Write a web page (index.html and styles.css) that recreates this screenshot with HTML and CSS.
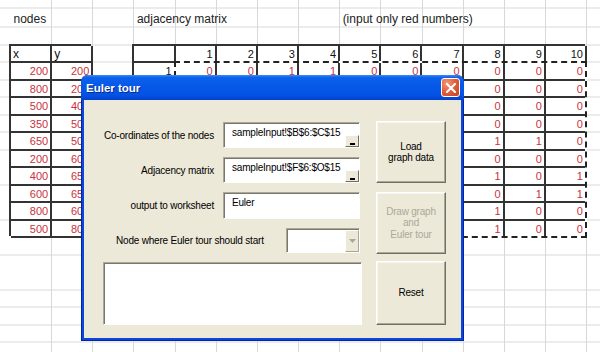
FILE: index.html
```html
<!doctype html>
<head>
    <meta charSet="utf-8" />
    <meta name="viewport" content="width=device-width, initial-scale=1" />
    <title>Euler tour</title>
    <link rel="stylesheet" href="styles.css">
</head>
<body>
    <div class="sheet">
        <div class="label nodes_label">nodes</div>
        <div class="label matrix_label">adjacency matrix</div>
        <div class="label hint_label">(input only red numbers)</div>

        <div class="tbl nodes_tbl">
            <div class="cell head">x</div><div class="cell head">y</div>
            <div class="cell red">200</div><div class="cell red">200</div>
            <div class="cell red">800</div><div class="cell red">200</div>
            <div class="cell red">500</div><div class="cell red">400</div>
            <div class="cell red">350</div><div class="cell red">500</div>
            <div class="cell red">650</div><div class="cell red">500</div>
            <div class="cell red">200</div><div class="cell red">600</div>
            <div class="cell red">400</div><div class="cell red">650</div>
            <div class="cell red">600</div><div class="cell red">650</div>
            <div class="cell red">800</div><div class="cell red">600</div>
            <div class="cell red">500</div><div class="cell red">800</div>
        </div>

        <!-- rows 2-10, columns 1-7 sit under the dialog, so they stay empty -->
        <div class="tbl matrix_tbl">
            <div class="cell"></div><div class="cell">1</div><div class="cell">2</div><div class="cell">3</div><div class="cell">4</div><div class="cell">5</div><div class="cell">6</div><div class="cell">7</div><div class="cell">8</div><div class="cell">9</div><div class="cell">10</div>
            <div class="cell">1</div><div class="cell red">0</div><div class="cell red">0</div><div class="cell red">1</div><div class="cell red">1</div><div class="cell red">0</div><div class="cell red">0</div><div class="cell red">0</div><div class="cell red">0</div><div class="cell red">0</div><div class="cell red">0</div>
            <div class="cell"></div><div class="cell"></div><div class="cell"></div><div class="cell"></div><div class="cell"></div><div class="cell"></div><div class="cell"></div><div class="cell"></div><div class="cell red">0</div><div class="cell red">0</div><div class="cell red">0</div>
            <div class="cell"></div><div class="cell"></div><div class="cell"></div><div class="cell"></div><div class="cell"></div><div class="cell"></div><div class="cell"></div><div class="cell"></div><div class="cell red">0</div><div class="cell red">0</div><div class="cell red">0</div>
            <div class="cell"></div><div class="cell"></div><div class="cell"></div><div class="cell"></div><div class="cell"></div><div class="cell"></div><div class="cell"></div><div class="cell"></div><div class="cell red">0</div><div class="cell red">0</div><div class="cell red">0</div>
            <div class="cell"></div><div class="cell"></div><div class="cell"></div><div class="cell"></div><div class="cell"></div><div class="cell"></div><div class="cell"></div><div class="cell"></div><div class="cell red">1</div><div class="cell red">1</div><div class="cell red">0</div>
            <div class="cell"></div><div class="cell"></div><div class="cell"></div><div class="cell"></div><div class="cell"></div><div class="cell"></div><div class="cell"></div><div class="cell"></div><div class="cell red">0</div><div class="cell red">0</div><div class="cell red">0</div>
            <div class="cell"></div><div class="cell"></div><div class="cell"></div><div class="cell"></div><div class="cell"></div><div class="cell"></div><div class="cell"></div><div class="cell"></div><div class="cell red">1</div><div class="cell red">0</div><div class="cell red">1</div>
            <div class="cell"></div><div class="cell"></div><div class="cell"></div><div class="cell"></div><div class="cell"></div><div class="cell"></div><div class="cell"></div><div class="cell"></div><div class="cell red">0</div><div class="cell red">1</div><div class="cell red">1</div>
            <div class="cell"></div><div class="cell"></div><div class="cell"></div><div class="cell"></div><div class="cell"></div><div class="cell"></div><div class="cell"></div><div class="cell"></div><div class="cell red">1</div><div class="cell red">0</div><div class="cell red">0</div>
            <div class="cell"></div><div class="cell"></div><div class="cell"></div><div class="cell"></div><div class="cell"></div><div class="cell"></div><div class="cell"></div><div class="cell"></div><div class="cell red">1</div><div class="cell red">0</div><div class="cell red">0</div>
        </div>
        <div class="ants"></div>

        <div class="dialog">
            <div class="titlebar">
                <span class="title">Euler tour</span>
                <span class="close">
                    <svg width="10" height="10" viewBox="0 0 10 10"><path d="M1 1 L9 9 M9 1 L1 9" stroke="#fff" stroke-width="2" stroke-linecap="square"/></svg>
                </span>
            </div>
            <div class="client">
                <div class="left_col">
                    <div class="fields">
                        <label class="field_label">Co-ordinates of the nodes</label>
                        <div class="textbox"><span class="tb_text">sampleInput!$B$6:$C$15</span><span class="ref_btn"><i></i></span></div>
                        <label class="field_label">Adjacency matrix</label>
                        <div class="textbox"><span class="tb_text">sampleInput!$F$6:$O$15</span><span class="ref_btn"><i></i></span></div>
                        <label class="field_label">output to worksheet</label>
                        <div class="textbox tall"><span class="tb_text">Euler</span></div>
                    </div>
                    <div class="start_row">
                        <label class="start_label">Node where Euler tour should start</label>
                        <div class="combo"><span class="combo_text"></span><span class="combo_btn"><svg width="7" height="4" viewBox="0 0 7 4"><path d="M0 0 H7 L3.5 4 Z" fill="#aca899"/></svg></span></div>
                    </div>
                    <div class="listbox"></div>
                </div>
                <div class="btn_col">
                    <div class="btn load">Load<br>graph data</div>
                    <div class="btn draw disabled">Draw graph<br>and<br>Euler tour</div>
                    <div class="btn reset">Reset</div>
                </div>
            </div>
        </div>
    </div>
</body>
</html>
```

FILE: styles.css
```css
body {
    margin: 0;
    background: #fff;
    overflow: hidden;
    font-family: "Liberation Sans", Arial, sans-serif;
}
.sheet {
    position: relative;
    width: 600px;
    height: 352px;
    display: grid;
    grid-template-columns: 11px repeat(14, 41.15px) 1fr;
    grid-template-rows: 10.5px repeat(20, 17.5px);
    background-image:
        repeating-linear-gradient(to right, transparent 0 40.15px, #d8d8d8 40.15px 41.15px),
        repeating-linear-gradient(to bottom, transparent 0 16.5px, #d8d8d8 16.5px 17.5px);
    background-position: 11px 0, 0 10.5px;
}
.label {
    font-size: 12px;
    color: #222;
    white-space: nowrap;
    align-self: center;
    padding-left: 2.5px;
}
.nodes_label { grid-column: 2; grid-row: 2; }
.matrix_label { grid-column: 5; grid-row: 2; }
.hint_label { grid-column: 10; grid-row: 2; }

.tbl {
    display: grid;
    grid-template-rows: repeat(11, 1fr);
    box-shadow: -2px -2px 0 #333;
    background: #fff;
}
.nodes_tbl {
    grid-column: 2 / 4;
    grid-row: 4 / 15;
    grid-template-columns: repeat(2, 1fr);
}
.matrix_tbl {
    grid-column: 5 / 16;
    grid-row: 4 / 15;
    grid-template-columns: repeat(11, 1fr);
}
.cell {
    box-sizing: border-box;
    border-right: 2px solid #333;
    border-bottom: 2px solid #333;
    font-size: 11px;
    color: #111;
    text-align: right;
    padding-right: 2px;
    line-height: 16px;
    overflow: hidden;
}
.cell.head {
    text-align: left;
    padding-left: 2px;
    font-size: 12px;
}
.cell.red {
    color: #c8323c;
}
.ants {
    grid-column: 6 / 16;
    grid-row: 5 / 15;
    margin: -2px 0 0 -2px;
    border: 2px solid #fff;
}
.ants::before {
    content: "";
    display: block;
    box-sizing: border-box;
    margin: -2px;
    height: calc(100% + 4px);
    border: 2px dashed #222;
}

.dialog {
    position: absolute;
    left: 81px;
    top: 75px;
    width: 383px;
    border-radius: 7px 7px 0 0;
    overflow: hidden;
    background: #0c47dc;
    box-shadow: inset 0 0 0 1px #0026a6;
}
.titlebar {
    height: 25px;
    display: flex;
    align-items: center;
    padding: 0 4px 0 5px;
    background: linear-gradient(to bottom, #3d8cf5 0%, #0d62ec 10%, #0558e8 45%, #0452e4 80%, #0340cc 100%);
}
.title {
    color: #fff;
    font-weight: bold;
    font-size: 11.5px;
    text-shadow: 1px 1px 0 #0a2a8a;
    flex-grow: 1;
}
.close {
    width: 17px;
    height: 17px;
    border: 1px solid #fff;
    border-radius: 3px;
    display: flex;
    align-items: center;
    justify-content: center;
    background: radial-gradient(circle at 30% 25%, #f19a7e 0%, #e2623f 45%, #c7401b 100%);
}
.client {
    margin: 0 3px 3px;
    background: #ece9d8;
    display: flex;
    gap: 14px;
    padding: 21px 15px 13px 19px;
    font-size: 10px;
    letter-spacing: -0.2px;
    color: #000;
}
.left_col {
    width: 259px;
    margin-top: 1px;
}
.fields {
    display: grid;
    grid-template-columns: 111px 137px;
    grid-template-rows: 26px 26px 27px;
    column-gap: 9px;
    row-gap: 9px;
}
.field_label {
    text-align: right;
    align-self: center;
    white-space: nowrap;
}
.textbox {
    box-sizing: border-box;
    background: #fff;
    border: 1px solid;
    border-color: #aca899 #fff #fff #aca899;
    box-shadow: inset 1px 1px 0 #7a776c;
    display: flex;
}
.tb_text {
    flex-grow: 1;
    padding: 4px 0 0 8px;
    white-space: nowrap;
}
.ref_btn {
    align-self: flex-end;
    width: 14px;
    height: 12px;
    box-sizing: border-box;
    background: #ece9d8;
    border: 1px solid;
    border-color: #fff #716f64 #716f64 #fff;
    display: flex;
    align-items: flex-end;
    justify-content: center;
}
.ref_btn i {
    width: 5px;
    height: 2px;
    background: #000;
    margin-bottom: 1px;
}
.start_row {
    display: flex;
    align-items: center;
    height: 25px;
    margin-top: 9px;
}
.start_label {
    margin-left: 13px;
    white-space: nowrap;
}
.combo {
    margin-left: auto;
    margin-right: 2px;
    width: 74px;
    height: 25px;
    box-sizing: border-box;
    background: #fff;
    border: 1px solid;
    border-color: #aca899 #fff #fff #aca899;
    box-shadow: inset 1px 1px 0 #7a776c;
    display: flex;
    padding: 1px 0 0 1px;
}
.combo_text {
    flex-grow: 1;
}
.combo_btn {
    width: 14px;
    box-sizing: border-box;
    background: #ece9d8;
    border: 1px solid;
    border-color: #fff #aca899 #aca899 #fff;
    display: flex;
    align-items: center;
    justify-content: center;
}
.listbox {
    margin-top: 9px;
    height: 63px;
    box-sizing: border-box;
    background: #fff;
    border: 1px solid;
    border-color: #aca899 #fff #fff #aca899;
    box-shadow: inset 1px 1px 0 #7a776c;
}
.btn_col {
    width: 70px;
    display: flex;
    flex-direction: column;
}
.btn {
    box-sizing: border-box;
    background: #ece9d8;
    border: 1px solid;
    border-color: #fff #716f64 #716f64 #fff;
    box-shadow: inset -1px -1px 0 #aca899, inset 1px 1px 0 #f7f6f0;
    display: flex;
    align-items: center;
    justify-content: center;
    text-align: center;
    line-height: 11.5px;
}
.load { height: 62px; }
.draw { height: 62px; margin-top: 9px; }
.reset { height: 64px; margin-top: 7px; }
.disabled { color: #aca899; }
```
